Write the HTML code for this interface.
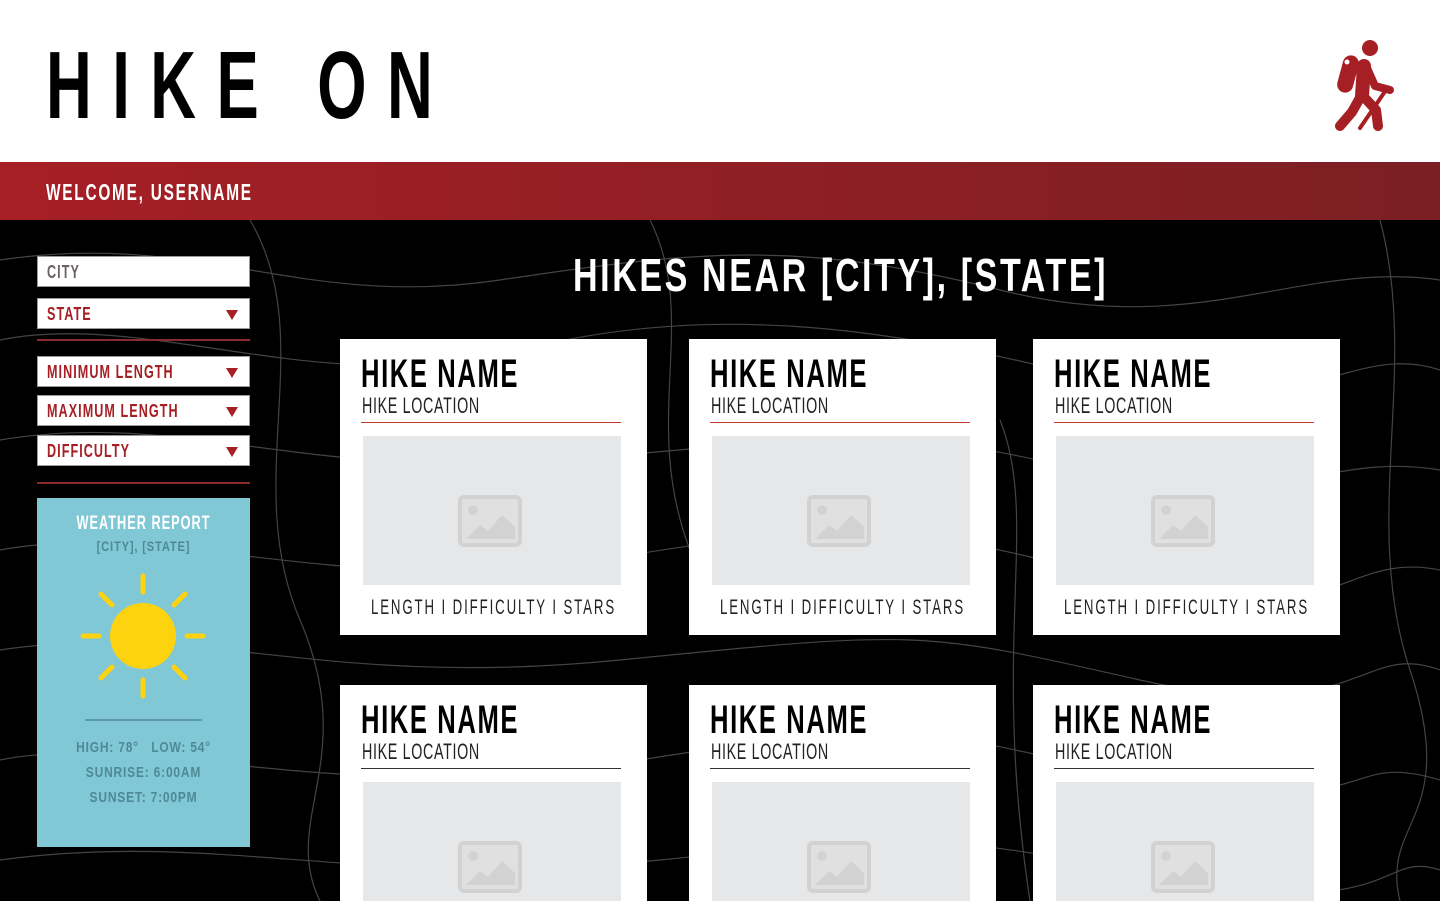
<!DOCTYPE html>
<html><head><meta charset="utf-8"><style>
*{margin:0;padding:0;box-sizing:border-box}
html,body{width:1440px;height:901px;overflow:hidden}
body{background:#000;font-family:"Liberation Sans",sans-serif;position:relative}
.hdr{position:absolute;left:0;top:0;width:1440px;height:162px;background:#fff}
.title{position:absolute;left:46px;top:38px;font-size:96px;font-weight:bold;letter-spacing:31px;color:#000;line-height:1;transform:scaleX(.66);transform-origin:0 0;white-space:nowrap}
.bar{position:absolute;left:0;top:162px;width:1440px;height:58px;background:linear-gradient(90deg,#a61f25,#7b1f24)}
.bar span{position:absolute;left:46px;top:17px;color:#fff;font-weight:bold;font-size:23px;letter-spacing:2.6px;transform:scaleX(.67);transform-origin:0 0;white-space:nowrap}
.topo{position:absolute;left:0;top:220px}
.in{position:absolute;left:37px;width:213px;height:31px;background:#fff;border:1px solid #999;color:#a61f25;font-weight:bold;font-size:18px;padding:5px 0 0 9px}
.in span{display:inline-block;transform:scaleX(.7);transform-origin:0 0;letter-spacing:1.5px;white-space:nowrap}
.in:after{content:"";position:absolute;right:11px;top:11px;border-left:6px solid transparent;border-right:6px solid transparent;border-top:10px solid #a61f25}
.in.nc:after{display:none}
.rl{position:absolute;left:37px;width:213px;height:2px;background:#8a2a2a}
.wx{position:absolute;left:37px;top:498px;width:213px;height:349px;background:#80c8d6;color:#4f8996;font-weight:bold}
.wx div{position:absolute;left:0;width:213px;text-align:center;white-space:nowrap}
h1{position:absolute;left:573px;top:252px;color:#fff;font-size:46px;letter-spacing:3.5px;font-weight:bold;line-height:1;transform:scaleX(.74);transform-origin:0 0;white-space:nowrap}
.card{position:absolute;width:307px;background:#fff}
.card .n{position:absolute;left:21px;top:15px;font-size:40px;font-weight:bold;letter-spacing:2.5px;line-height:1;transform:scaleX(.64);transform-origin:0 0;white-space:nowrap}
.card .l{position:absolute;left:22px;top:56px;font-size:22px;letter-spacing:1px;color:#222;line-height:1;transform:scaleX(.65);transform-origin:0 0;white-space:nowrap}
.card .ln{position:absolute;left:21px;top:83px;width:260px;height:1px;background:#c23a2a}
.card .im{position:absolute;left:23px;top:97px;width:258px;height:149px;background:#e6e7e8}
.card .im svg{position:absolute;left:95px;top:59px}
.card .s{position:absolute;left:-100px;width:507px;top:258px;text-align:center;font-size:21px;letter-spacing:3px;color:#222;line-height:1;transform:scaleX(.63);white-space:nowrap}
</style></head><body>
<div class="hdr"><div class="title">HIKE ON</div>
<svg style="position:absolute;left:1334px;top:38px" width="64" height="94" viewBox="0 0 64 94">
<g fill="#a61f25"><circle cx="36" cy="10" r="8"/>
<rect x="6" y="17" width="16" height="38" rx="8" transform="rotate(15 14 36)"/></g>
<circle cx="13" cy="24" r="2.5" fill="#fff"/>
<g stroke="#a61f25" stroke-linecap="round" stroke-linejoin="round" fill="none">
<path d="M30 28L28 58" stroke-width="14"/>
<path d="M33 30L41 48L56 52" stroke-width="8"/>
<path d="M52 52L26 90" stroke-width="4"/>
<path d="M27 58L18 74L6 88" stroke-width="10"/>
<path d="M29 58L42 72L44 88" stroke-width="10"/>
</g></svg>
</div>
<div class="bar"><span>WELCOME, USERNAME</span></div>
<svg class="topo" width="1440" height="681" viewBox="0 0 1440 681" fill="none" stroke="#555" stroke-width="1.2" opacity=".8">
<path d="M0 40 C200 10 300 90 500 60 S800 20 1000 70 1300 40 1440 60"/>
<path d="M0 120 C150 90 320 180 520 130 S900 110 1100 160 1350 120 1440 150"/>
<path d="M0 220 C180 190 300 260 560 240 S880 200 1080 250 1320 230 1440 250"/>
<path d="M0 330 C160 300 360 380 600 340 S900 300 1120 360 1340 330 1440 350"/>
<path d="M0 430 C200 400 320 470 620 440 S920 410 1140 460 1360 420 1440 450"/>
<path d="M0 540 C150 510 330 590 640 540 S940 520 1160 560 1340 530 1440 560"/>
<path d="M0 640 C220 610 360 670 660 640 S960 620 1180 660 1380 630 1440 650"/>
<path d="M250 0 C320 120 240 260 300 400 S280 600 320 681"/>
<path d="M1380 0 C1420 150 1360 300 1410 450 S1380 600 1400 681"/>
<path d="M650 0 C700 100 640 200 690 330"/><path d="M1000 200 C1040 300 990 420 1030 681"/>
</svg>
<div class="in nc" style="top:256px;color:#6b6363"><span>CITY</span></div>
<div class="in" style="top:298px"><span>STATE</span></div>
<div class="rl" style="top:339px"></div>
<div class="in" style="top:356px"><span>MINIMUM LENGTH</span></div>
<div class="in" style="top:395px"><span>MAXIMUM LENGTH</span></div>
<div class="in" style="top:435px"><span>DIFFICULTY</span></div>
<div class="rl" style="top:482px"></div>
<div class="wx">
<div style="top:15px;color:#fff;font-size:19px;letter-spacing:1.5px;transform:scaleX(.67)">WEATHER REPORT</div>
<div style="top:40px;font-size:14px;letter-spacing:1px;transform:scaleX(.8)">[CITY], [STATE]</div>
<svg width="130" height="130" viewBox="-65 -65 130 130" style="position:absolute;left:41px;top:73px"><circle r="33" fill="#fdd20f"/><g stroke="#fdd20f" stroke-width="5" stroke-linecap="round"><path d="M0-44V-60M0 44V60M-44 0H-60M44 0H60M31-31L42-42M-31-31L-42-42M31 31L42 42M-31 31L-42 42"/></g></svg>
<div style="top:221px;left:48px;width:117px;height:2px;background:#5d9aa8"></div>
<div style="top:241px;font-size:15px;letter-spacing:1px;transform:scaleX(.8)">HIGH: 78°&nbsp;&nbsp;&nbsp;LOW: 54°</div>
<div style="top:266px;font-size:15px;letter-spacing:1px;transform:scaleX(.8)">SUNRISE: 6:00AM</div>
<div style="top:291px;font-size:15px;letter-spacing:1px;transform:scaleX(.8)">SUNSET: 7:00PM</div>
</div>
<h1>HIKES NEAR [CITY], [STATE]</h1>
<div class="card" style="left:340px;top:339px;height:296px"><div class="n">HIKE NAME</div><div class="l">HIKE LOCATION</div><div class="ln"></div><div class="im"><svg width="64" height="52" viewBox="0 0 64 52"><rect x="2" y="2" width="60" height="48" rx="4" fill="#e0e0e0" stroke="#d2d2d2" stroke-width="4"/><circle cx="15" cy="15" r="5" fill="#d2d2d2"/><path d="M8 44l14-14 8 6 14-16 13 12v12z" fill="#d2d2d2"/></svg></div><div class="s">LENGTH I DIFFICULTY I STARS</div></div>
<div class="card" style="left:689px;top:339px;height:296px"><div class="n">HIKE NAME</div><div class="l">HIKE LOCATION</div><div class="ln"></div><div class="im"><svg width="64" height="52" viewBox="0 0 64 52"><rect x="2" y="2" width="60" height="48" rx="4" fill="#e0e0e0" stroke="#d2d2d2" stroke-width="4"/><circle cx="15" cy="15" r="5" fill="#d2d2d2"/><path d="M8 44l14-14 8 6 14-16 13 12v12z" fill="#d2d2d2"/></svg></div><div class="s">LENGTH I DIFFICULTY I STARS</div></div>
<div class="card" style="left:1033px;top:339px;height:296px"><div class="n">HIKE NAME</div><div class="l">HIKE LOCATION</div><div class="ln"></div><div class="im"><svg width="64" height="52" viewBox="0 0 64 52"><rect x="2" y="2" width="60" height="48" rx="4" fill="#e0e0e0" stroke="#d2d2d2" stroke-width="4"/><circle cx="15" cy="15" r="5" fill="#d2d2d2"/><path d="M8 44l14-14 8 6 14-16 13 12v12z" fill="#d2d2d2"/></svg></div><div class="s">LENGTH I DIFFICULTY I STARS</div></div>
<div class="card" style="left:340px;top:685px;height:216px"><div class="n">HIKE NAME</div><div class="l">HIKE LOCATION</div><div class="ln" style="background:#333"></div><div class="im"><svg width="64" height="52" viewBox="0 0 64 52"><rect x="2" y="2" width="60" height="48" rx="4" fill="#e0e0e0" stroke="#d2d2d2" stroke-width="4"/><circle cx="15" cy="15" r="5" fill="#d2d2d2"/><path d="M8 44l14-14 8 6 14-16 13 12v12z" fill="#d2d2d2"/></svg></div></div>
<div class="card" style="left:689px;top:685px;height:216px"><div class="n">HIKE NAME</div><div class="l">HIKE LOCATION</div><div class="ln" style="background:#333"></div><div class="im"><svg width="64" height="52" viewBox="0 0 64 52"><rect x="2" y="2" width="60" height="48" rx="4" fill="#e0e0e0" stroke="#d2d2d2" stroke-width="4"/><circle cx="15" cy="15" r="5" fill="#d2d2d2"/><path d="M8 44l14-14 8 6 14-16 13 12v12z" fill="#d2d2d2"/></svg></div></div>
<div class="card" style="left:1033px;top:685px;height:216px"><div class="n">HIKE NAME</div><div class="l">HIKE LOCATION</div><div class="ln" style="background:#333"></div><div class="im"><svg width="64" height="52" viewBox="0 0 64 52"><rect x="2" y="2" width="60" height="48" rx="4" fill="#e0e0e0" stroke="#d2d2d2" stroke-width="4"/><circle cx="15" cy="15" r="5" fill="#d2d2d2"/><path d="M8 44l14-14 8 6 14-16 13 12v12z" fill="#d2d2d2"/></svg></div></div>
</body></html>
